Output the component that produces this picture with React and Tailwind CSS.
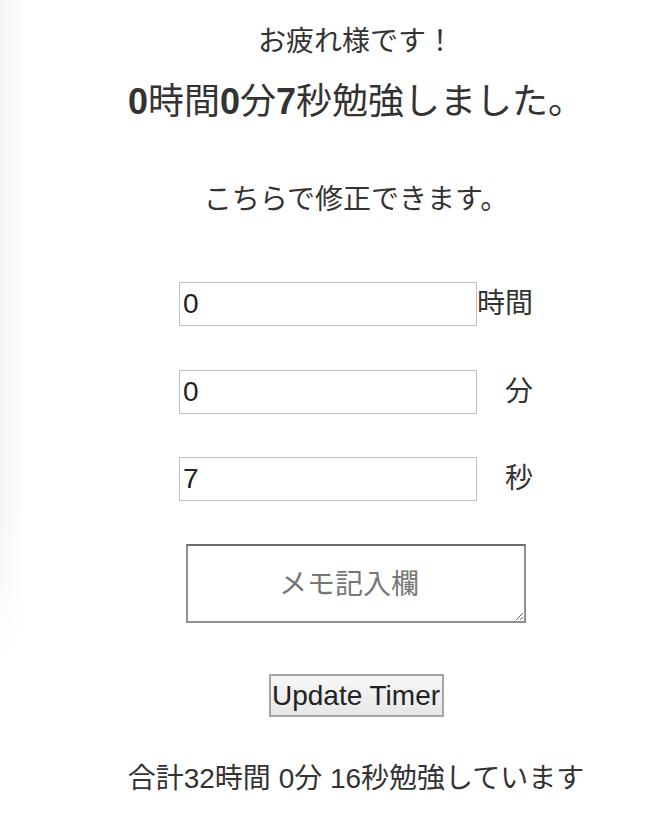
import React, { useState } from "react";

const font = "font-['Liberation_Sans','Noto_Sans_CJK_JP',sans-serif]";

const TimeRow = ({ value, onChange, label }) => (
  <div className="flex items-center h-[44px]">
    <input
      type="text"
      value={value}
      onChange={(e) => onChange(e.target.value)}
      className="w-[298px] h-[44px] border border-[#c2c2c2] bg-white px-[3px] text-[28px] text-[#222] outline-none"
    />
    <span className="w-[56px] text-right text-[28px] leading-[34px] text-[#333]">{label}</span>
  </div>
);

const App = () => {
  const [hours, setHours] = useState("0");
  const [minutes, setMinutes] = useState("0");
  const [seconds, setSeconds] = useState("7");
  const [memo, setMemo] = useState("");

  return (
    <div className={`relative min-h-[838px] bg-white ${font} text-[#333]`}>
      {/* faint shadow on the left edge */}
      <div className="pointer-events-none absolute left-0 top-0 w-[26px] h-[660px] bg-gradient-to-r from-[#f4f4f4] to-white [mask-image:linear-gradient(to_bottom,black_75%,transparent)]" />

      <div className="relative flex flex-col items-center pl-[56px] pt-[25px]">
        <p className="text-[28px] leading-[34px]">お疲れ様です！</p>

        <h2 className="mt-[22px] text-[36px] leading-[42px] font-normal">
          <span className="font-bold">0</span>時間<span className="font-bold">0</span>分
          <span className="font-bold">7</span>秒勉強しました。
        </h2>

        <p className="mt-[60px] text-[28px] leading-[34px]">こちらで修正できます。</p>

        <div className="mt-[65px] flex flex-col gap-[43.5px]">
          <TimeRow value={hours} onChange={setHours} label="時間" />
          <TimeRow value={minutes} onChange={setMinutes} label="分" />
          <TimeRow value={seconds} onChange={setSeconds} label="秒" />
        </div>

        <textarea
          value={memo}
          onChange={(e) => setMemo(e.target.value)}
          placeholder="メモ記入欄"
          className="mt-[43px] w-[340px] h-[79px] border-2 border-[#8f8f8f] border-t-[#6f6f6f] bg-white pt-[22px] pl-[2px] pr-[16px] text-center text-[28px] leading-[34px] text-[#222] placeholder:text-[#767676] outline-none"
        />

        <button className="mt-[51px] w-[175px] h-[43px] border-2 border-[#a5a5a5] bg-gradient-to-b from-[#f7f7f7] to-[#e7e7e7] text-[28px] leading-[34px] text-[#222]">
          Update Timer
        </button>

        <p className="mt-[45px] text-[28px] leading-[34px]">合計32時間 0分 16秒勉強しています</p>
      </div>
    </div>
  );
};

export default App;
